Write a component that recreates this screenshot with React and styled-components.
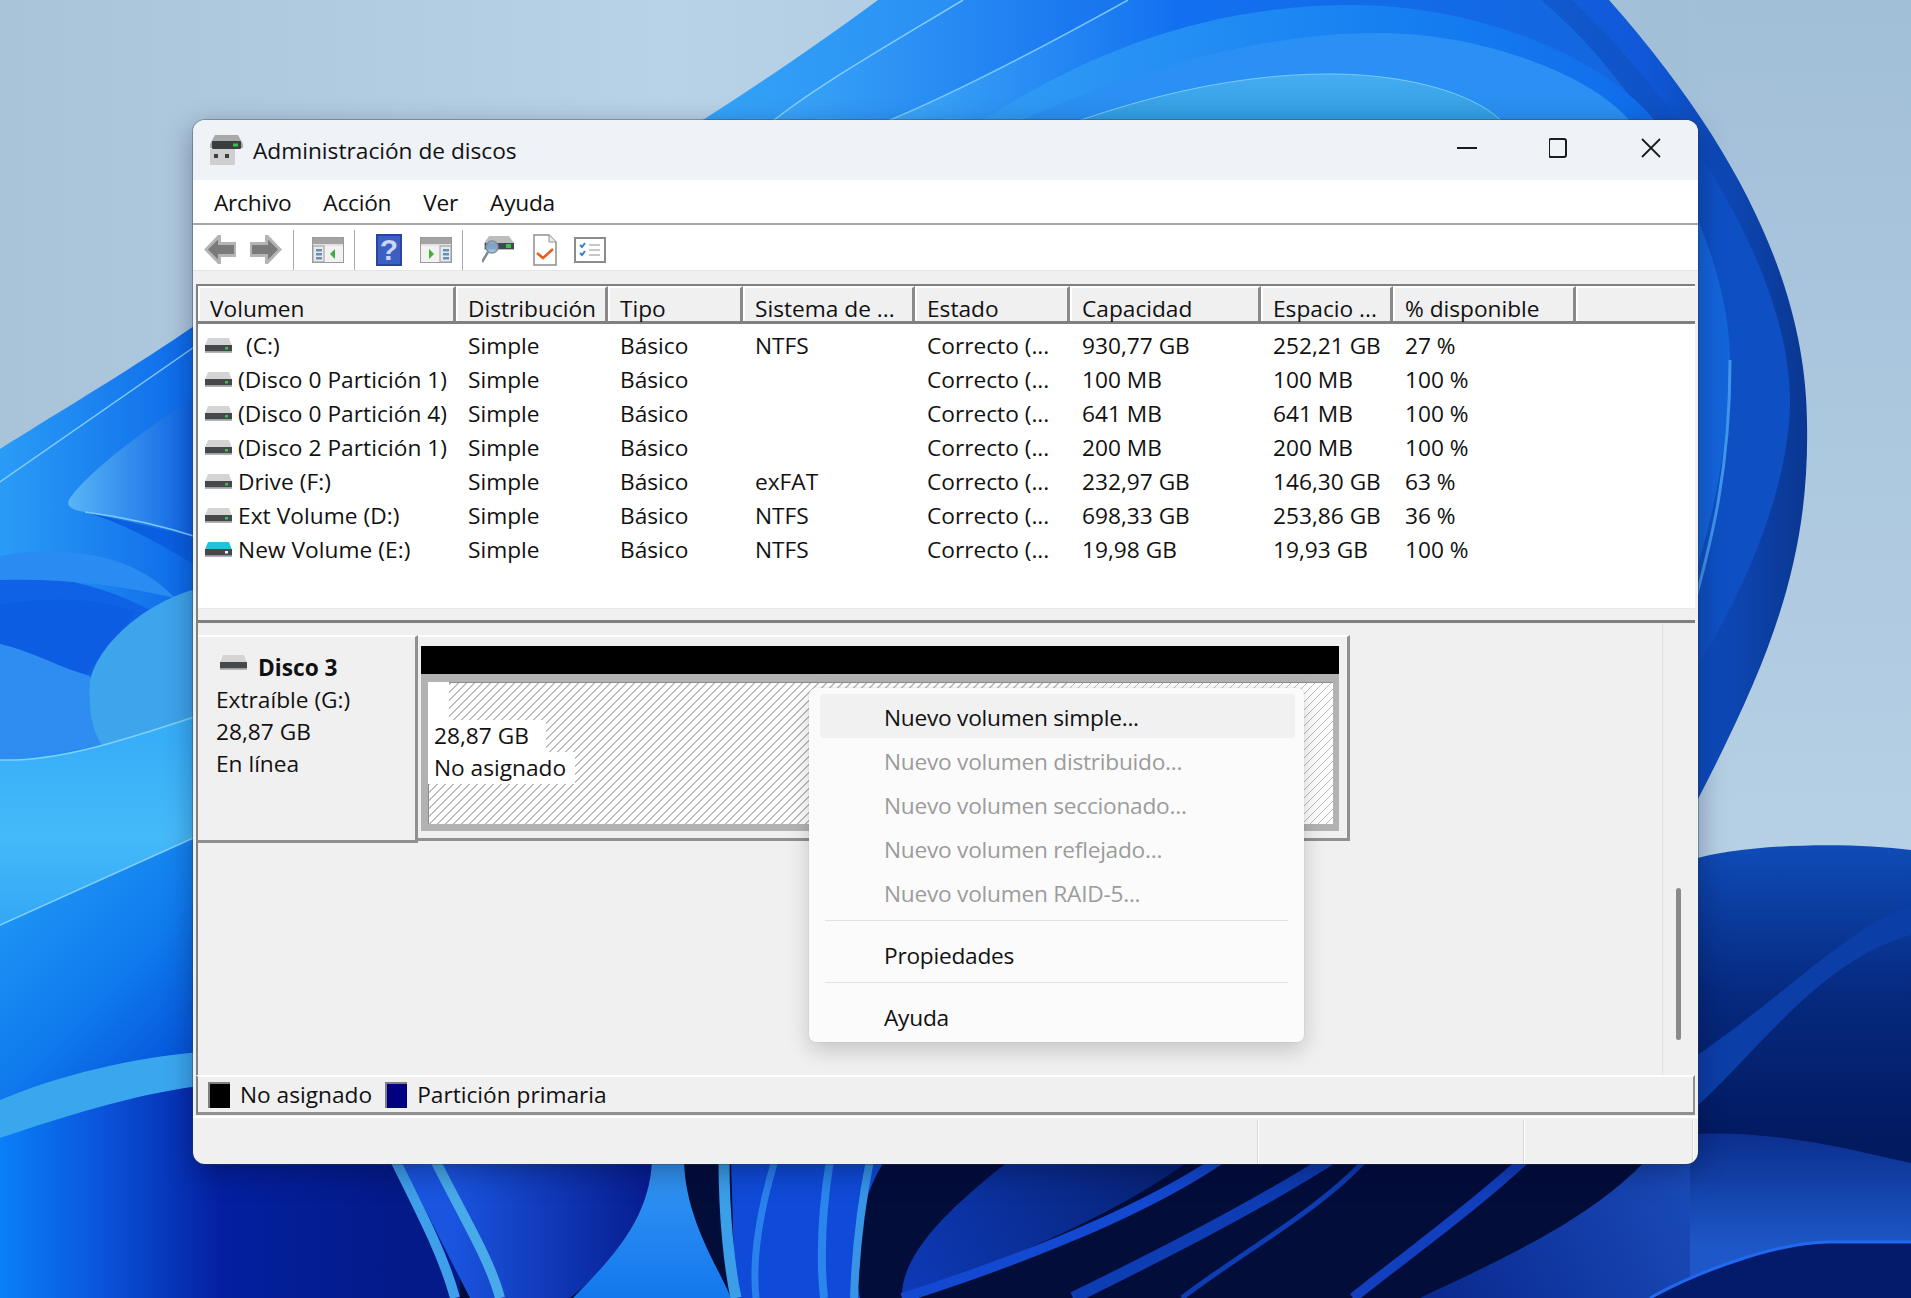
import React from "react";
import styled, { createGlobalStyle } from "styled-components";

const GlobalStyle = createGlobalStyle`
 html, body {
  margin: 0;
  padding: 0;
  overflow: hidden;
  background: #b4cde2;
  font-family: "Open Sans", "Noto Sans", "Liberation Sans", sans-serif;
  color: #111;
 }
`;

const Desktop = styled.div`
 position: relative;
 box-sizing: border-box;
 width: 1911px;
 height: 1298px;
 padding: 120px 0 0 193px;
 overflow: hidden;
`;

const WallpaperSvg = styled.svg`
 position: absolute;
 top: 0;
 left: 0;
 width: 1911px;
 height: 1298px;
`;

const Window = styled.div`
 position: relative;
 display: flex;
 flex-direction: column;
 width: 1505px;
 height: 1044px;
 border-radius: 12px;
 overflow: hidden;
 background: #f0f0f0;
 box-shadow: 0 0 0 1px rgba(50, 60, 70, 0.35), 0 8px 28px rgba(0, 10, 40, 0.35);
 font-size: 22.7px;
`;

const TitleBar = styled.div`
 display: flex;
 align-items: center;
 flex: 0 0 60px;
 padding: 0 37px 0 17px;
 background: #eff3f8;
`;

const TitleText = styled.div`
 flex: 1;
 margin-left: 10px;
`;

const WindowButtons = styled.div`
 display: flex;
 align-items: center;
 gap: 72px;
 margin-bottom: 5px;
`;

const MenuBar = styled.div`
 display: flex;
 gap: 32px;
 align-items: center;
 box-sizing: border-box;
 flex: 0 0 45px;
 padding: 2px 0 0 21px;
 background: #fff;
 border-bottom: 2px solid #a8a8a8;
 letter-spacing: -0.25px;
`;

const Toolbar = styled.div`
 display: flex;
 align-items: center;
 flex: 0 0 46px;
 box-sizing: border-box;
 padding: 4px 0 0 11px;
 background: #fff;
 border-bottom: 1px solid #e4e4e4;
`;

const ToolIcon = styled.div`
 display: flex;
 margin-left: ${(p) => p.$gap || 0}px;
`;

const ToolSeparator = styled.div`
 width: 1px;
 height: 40px;
 margin-left: ${(p) => p.$gap}px;
 background: #a8a8a8;
`;

const Body = styled.div`
 display: flex;
 flex-direction: column;
 flex: 1;
 min-height: 0;
 padding: 13px 3px 0 3px;
`;

const ListPane = styled.div`
 display: flex;
 flex-direction: column;
 flex: 0 0 339px;
 box-sizing: border-box;
 border-top: 2px solid #808080;
 border-left: 2px solid #808080;
 border-bottom: 3px solid #808080;
 background: #fff;
`;

const HeaderRow = styled.div`
 display: grid;
 grid-template-columns: 258px 152px 135px 172px 155px 191px 132px 183px 1fr;
 flex: 0 0 38px;
 box-sizing: border-box;
 border-bottom: 3px solid #808080;
 background: #f0f0f0;
`;

const HeaderCell = styled.div`
 box-sizing: border-box;
 height: 35px;
 padding: 9px 0 0 10px;
 border-top: 2px solid #fff;
 border-left: 2px solid #fff;
 border-right: ${(p) => (p.$last ? "0" : "3px solid #8a8a8a")};
 line-height: 24px;
 white-space: nowrap;
`;

const Rows = styled.div`
 flex: 1;
 padding-top: 4px;
`;

const Row = styled.div`
 display: grid;
 grid-template-columns: 258px 152px 135px 172px 155px 191px 132px 183px 1fr;
 align-items: center;
 height: 34px;
`;

const Cell = styled.div`
 padding-left: 12px;
 white-space: pre;
`;

const NameCell = styled.div`
 display: flex;
 align-items: center;
 gap: ${(p) => p.$gap || 6}px;
 padding-left: 7px;
 white-space: pre;
 letter-spacing: 0.05px;
`;

const HScrollArea = styled.div`
 flex: 0 0 11px;
 background: #f0f0f0;
 border-top: 1px solid #e8e8e8;
`;

const DiskPane = styled.div`
 display: flex;
 flex: 0 0 452px;
 border-left: 2px solid #808080;
 background: #f0f0f0;
`;

const DiskContent = styled.div`
 flex: 1;
 padding-top: 12px;
`;

const DiskRow = styled.div`
 display: flex;
`;

const DiskLabel = styled.div`
 box-sizing: border-box;
 width: 220px;
 height: 208px;
 padding: 15px 0 0 18px;
 background: #f0f0f0;
 border-top: 2px solid #fff;
 border-bottom: 3px solid #909090;
 border-right: 3px solid #909090;
 line-height: 32px;
`;

const DiskName = styled.div`
 display: flex;
 align-items: center;
 gap: 11px;
 font-weight: 700;
 padding-left: 4px;
 height: 32px;
`;

const DiskGlyph = styled.div`
 display: flex;
 margin-bottom: 12px;
`;

const PartitionBox = styled.div`
 box-sizing: border-box;
 width: 932px;
 height: 206px;
 padding: 9px 0 0 3px;
 border-top: 2px solid #fff;
 border-right: 3px solid #909090;
 border-bottom: 3px solid #909090;
 background: #f0f0f0;
`;

const PartitionFrame = styled.div`
 width: 918px;
`;

const BlackBar = styled.div`
 height: 28px;
 background: #000;
`;

const HatchFrame = styled.div`
 box-sizing: border-box;
 height: 157px;
 padding: 8px 6px 7px 7px;
 background: #b2b2b2;
`;

const Hatch = styled.div`
 height: 100%;
 background: repeating-linear-gradient(135deg, #fff 0 4.7px, #bcbcbc 4.7px 5.66px);
 box-shadow: inset 1px 1px 0 #8c8c8c;
`;

const HatchBlank = styled.div`
 width: 21px;
 height: 38px;
 background: #fff;
`;

const HatchLine = styled.div`
 width: ${(p) => p.$width}px;
 box-sizing: border-box;
 padding-left: 6px;
 height: 32px;
 line-height: 32px;
 background: #fff;
 white-space: nowrap;
`;

const ScrollTrack = styled.div`
 flex: 0 0 33px;
 box-sizing: border-box;
 padding: 265px 0 0 13px;
 border-left: 1px solid #e2e2e2;
`;

const ScrollThumb = styled.div`
 width: 5px;
 height: 152px;
 border-radius: 3px;
 background: #8a8a8a;
`;

const Legend = styled.div`
 display: flex;
 align-items: center;
 flex: 0 0 40px;
 box-sizing: border-box;
 padding: 0 0 0 10px;
 border-top: 2px solid #fff;
 border-left: 2px solid #808080;
 border-right: 2px solid #909090;
 border-bottom: 3px solid #909090;
`;

const Swatch = styled.div`
 box-sizing: border-box;
 width: 22px;
 height: 26px;
 margin-right: 10px;
 border-top: 2px solid #808080;
 border-left: 2px solid #808080;
 background: ${(p) => p.$color};
`;

const LegendText = styled.div`
 margin-right: ${(p) => p.$gap || 0}px;
 white-space: nowrap;
`;

const StatusBar = styled.div`
 display: grid;
 grid-template-columns: 1065px 266px 1fr;
 flex: 1;
 margin: 1px -3px 0;
 padding-right: 5px;
 border-top: 2px solid #fff;
`;

const StatusPart = styled.div`
 margin-top: 2px;
 border-right: 1px solid #d8d8d8;
 box-shadow: 1px 0 0 #fff;
`;

const ContextMenu = styled.div`
 position: absolute;
 top: 568px;
 left: 616px;
 box-sizing: border-box;
 width: 495px;
 height: 354px;
 padding: 6px 9px 0 11px;
 background: #fbfbfb;
 border-radius: 7px;
 box-shadow: 0 0 2px rgba(0, 0, 0, 0.12), 0 8px 22px rgba(0, 0, 0, 0.18);
 letter-spacing: -0.25px;
`;

const MenuItem = styled.div`
 display: flex;
 align-items: center;
 box-sizing: border-box;
 height: 44px;
 padding: ${(p) => (p.$active ? "3px 0 1px 64px" : "0 0 2px 64px")};
 margin-bottom: ${(p) => (p.$active ? "2px" : "0")};
 border-radius: 4px;
 color: ${(p) => (p.$disabled ? "#9c9c9c" : "#111")};
 background: ${(p) => (p.$active ? "#f1f1f1" : "transparent")};
`;

const MenuDivider = styled.div`
 height: 1px;
 margin: 4px 7px 13px 5px;
 background: #e2e2e2;
`;

const columns = ["Volumen", "Distribución", "Tipo", "Sistema de ...", "Estado", "Capacidad", "Espacio ...", "% disponible", ""];

const volumes = [
 [" (C:)", "Simple", "Básico", "NTFS", "Correcto (...", "930,77 GB", "252,21 GB", "27 %"],
 ["(Disco 0 Partición 1)", "Simple", "Básico", "", "Correcto (...", "100 MB", "100 MB", "100 %"],
 ["(Disco 0 Partición 4)", "Simple", "Básico", "", "Correcto (...", "641 MB", "641 MB", "100 %"],
 ["(Disco 2 Partición 1)", "Simple", "Básico", "", "Correcto (...", "200 MB", "200 MB", "100 %"],
 ["Drive (F:)", "Simple", "Básico", "exFAT", "Correcto (...", "232,97 GB", "146,30 GB", "63 %"],
 ["Ext Volume (D:)", "Simple", "Básico", "NTFS", "Correcto (...", "698,33 GB", "253,86 GB", "36 %"],
 ["New Volume (E:)", "Simple", "Básico", "NTFS", "Correcto (...", "19,98 GB", "19,93 GB", "100 %"],
];

function DriveIcon({ top = "#d4d4d4", led = "#37c24a" }) {
 return (
  <svg width="27" height="15" viewBox="0 0 27 15">
   <path d="M3 0H24L27 8V14H0V8Z" fill={top} />
   <rect x="0" y="7" width="27" height="6.5" fill="#45494c" />
   <rect x="0" y="13.5" width="27" height="1.5" fill="#b4b4b4" />
   <rect x="20" y="9" width="3" height="2.5" fill={led} />
  </svg>
 );
}

function AppIcon() {
 return (
  <svg width="33" height="30" viewBox="0 0 33 30">
   <path d="M5 0H28L33 9V13H0V9Z" fill="#a9a9a9" />
   <rect x="2" y="6" width="29" height="8" rx="1" fill="#3b3e40" />
   <rect x="23" y="8.500" width="5" height="3" fill="#36c24b" />
   <rect x="0" y="14" width="25" height="16" fill="#cfcfcf" />
   <rect x="4" y="19" width="4" height="4" fill="#3b3e40" />
   <rect x="15" y="19" width="4" height="4" fill="#3b3e40" />
  </svg>
 );
}

function ArrowIcon({ flip }) {
 return (
  <svg width="32" height="29" viewBox="0 0 32 29" style={{ transform: flip ? "scaleX(-1)" : "none" }}>
   <path d="M0 14.5L14 0H17V7H32V22H17V29H14Z" fill="#b4b4b4" />
   <path d="M4 14.5L14 4.500V10H30V19H14V24.500Z" fill="#7a7a7a" />
  </svg>
 );
}

function PanelIcon({ right }) {
 return (
  <svg width="32" height="26" viewBox="0 0 32 26">
   <rect x="0.5" y="0.5" width="31" height="25" fill="#f2f2f2" stroke="#9a9a9a" />
   <rect x="1" y="1" width="30" height="6" fill="#a3a3a3" />
   <rect x="1" y="7" width="30" height="2" fill="#e2e2e2" />
   <rect x={right ? 20 : 1} y="9" width="11" height="16" fill="#e6eaee" stroke="#9a9a9a" />
   <rect x={right ? 23 : 4} y="12" width="6" height="2.500" fill="#6a8fb5" />
   <rect x={right ? 23 : 4} y="16" width="6" height="2.500" fill="#6a8fb5" />
   <rect x={right ? 23 : 4} y="20" width="6" height="2.500" fill="#6a8fb5" />
   <path d={right ? "M9 12V22L14 17Z" : "M23 12V22L18 17Z"} fill="#3fae3a" />
  </svg>
 );
}

function HelpIcon() {
 return (
  <svg width="26" height="32" viewBox="0 0 26 32">
   <rect width="26" height="32" fill="#27449f" />
   <rect x="2" y="2" width="22" height="28" fill="#3c5fc4" />
   <text x="13" y="26" textAnchor="middle" fontFamily="Liberation Sans, sans-serif" fontWeight="700" fontSize="30" fill="#cdd5f2">?</text>
  </svg>
 );
}

function FindIcon() {
 return (
  <svg width="32" height="27" viewBox="0 0 32 27">
   <path d="M7 0H27L32 7V14H2V7Z" fill="#bdbdbd" />
   <rect x="3" y="7" width="29" height="6" fill="#3e4a50" />
   <rect x="24" y="8" width="5" height="4" fill="#3ec24d" />
   <circle cx="10" cy="11" r="6" fill="#8fb4d8" fillOpacity="0.85" stroke="#7f8f9c" strokeWidth="1.500" />
   <path d="M6 16L0 26" stroke="#7d8c9a" strokeWidth="2.500" />
  </svg>
 );
}

function CheckDocIcon() {
 return (
  <svg width="24" height="32" viewBox="0 0 24 32">
   <path d="M1 1H16L23 8V31H1Z" fill="#fff" stroke="#8f8f8f" strokeWidth="1.500" />
   <path d="M16 1V8H23" fill="#ececec" stroke="#8f8f8f" />
   <path d="M4 19L10 24L20 15" fill="none" stroke="#ea5a1e" strokeWidth="2.500" />
  </svg>
 );
}

function ChecklistIcon() {
 return (
  <svg width="32" height="26" viewBox="0 0 32 26">
   <rect x="1" y="1" width="30" height="24" fill="#fff" stroke="#8c8c8c" strokeWidth="2" />
   <path d="M6 8L8 10L11 6M6 16L8 18L11 14" fill="none" stroke="#2f7fd8" strokeWidth="2" />
   <path d="M15 8H26M15 13H26M15 18H26" stroke="#b5b5b5" strokeWidth="1.500" />
  </svg>
 );
}

function Wallpaper() {
 return (
  <WallpaperSvg viewBox="0 0 1911 1298">
   <defs>
    <linearGradient id="sky" x1="0" y1="0" x2="1" y2="0">
     <stop offset="0" stopColor="#a9c3d9" />
     <stop offset="0.35" stopColor="#b8d2e7" />
     <stop offset="0.87" stopColor="#a2bfd8" />
     <stop offset="1" stopColor="#a8c4dc" />
    </linearGradient>
    <linearGradient id="skyRight" x1="0" y1="0" x2="0" y2="1">
     <stop offset="0" stopColor="#a2bfd8" />
     <stop offset="1" stopColor="#b6d0e5" />
    </linearGradient>
    <linearGradient id="petalA" gradientUnits="userSpaceOnUse" x1="700" y1="0" x2="1810" y2="0">
     <stop offset="0" stopColor="#35a4f8" />
     <stop offset="0.5" stopColor="#1b76ee" />
     <stop offset="0.85" stopColor="#1058d8" />
     <stop offset="1" stopColor="#0a3690" />
    </linearGradient>
    <linearGradient id="petalB" gradientUnits="userSpaceOnUse" x1="770" y1="0" x2="1790" y2="0">
     <stop offset="0" stopColor="#3aa6f8" />
     <stop offset="0.3" stopColor="#1a78f0" />
     <stop offset="0.9" stopColor="#0e50c4" />
    </linearGradient>
    <linearGradient id="petalC" gradientUnits="userSpaceOnUse" x1="880" y1="0" x2="1730" y2="0">
     <stop offset="0" stopColor="#3fabf8" />
     <stop offset="0.35" stopColor="#1270f0" />
     <stop offset="1" stopColor="#1464da" />
    </linearGradient>
    <linearGradient id="archC" gradientUnits="userSpaceOnUse" x1="975" y1="0" x2="1658" y2="0">
     <stop offset="0" stopColor="#329df5" />
     <stop offset="0.6" stopColor="#1680f2" />
     <stop offset="1" stopColor="#106cea" />
    </linearGradient>
    <linearGradient id="archE" gradientUnits="userSpaceOnUse" x1="0" y1="70" x2="0" y2="125">
     <stop offset="0" stopColor="#47aef2" />
     <stop offset="1" stopColor="#2f9ce0" />
    </linearGradient>
    <linearGradient id="leftBase" gradientUnits="userSpaceOnUse" x1="0" y1="0" x2="200" y2="0">
     <stop offset="0" stopColor="#2a9cf7" />
     <stop offset="1" stopColor="#0c68e8" />
    </linearGradient>
    <linearGradient id="tip" gradientUnits="userSpaceOnUse" x1="70" y1="0" x2="200" y2="0">
     <stop offset="0" stopColor="#57b4f6" />
     <stop offset="1" stopColor="#0a5ee2" />
    </linearGradient>
    <linearGradient id="cyan" gradientUnits="userSpaceOnUse" x1="0" y1="740" x2="0" y2="930">
     <stop offset="0" stopColor="#37aef8" />
     <stop offset="0.5" stopColor="#45baf9" />
     <stop offset="1" stopColor="#33a6f6" />
    </linearGradient>
    <linearGradient id="lowerLeft" gradientUnits="userSpaceOnUse" x1="0" y1="850" x2="200" y2="1050">
     <stop offset="0" stopColor="#239cf6" />
     <stop offset="0.6" stopColor="#0f7bee" />
     <stop offset="1" stopColor="#0554d8" />
    </linearGradient>
    <linearGradient id="cornerLeft" gradientUnits="userSpaceOnUse" x1="0" y1="0" x2="400" y2="0">
     <stop offset="0" stopColor="#0a80f8" />
     <stop offset="0.25" stopColor="#0a55dc" />
     <stop offset="0.55" stopColor="#0420a0" />
     <stop offset="1" stopColor="#031a88" />
    </linearGradient>
    <linearGradient id="midBlue" gradientUnits="userSpaceOnUse" x1="450" y1="0" x2="660" y2="0">
     <stop offset="0" stopColor="#1a55e0" />
     <stop offset="1" stopColor="#061a8c" />
    </linearGradient>
    <linearGradient id="flare" gradientUnits="userSpaceOnUse" x1="0" y1="1160" x2="0" y2="1298">
     <stop offset="0" stopColor="#3596f2" />
     <stop offset="1" stopColor="#1378ee" />
    </linearGradient>
    <linearGradient id="broad" gradientUnits="userSpaceOnUse" x1="900" y1="1298" x2="1200" y2="1164">
     <stop offset="0" stopColor="#0d3ab8" />
     <stop offset="1" stopColor="#07206e" />
    </linearGradient>
    <linearGradient id="rightBottomA" gradientUnits="userSpaceOnUse" x1="0" y1="843" x2="0" y2="1140">
     <stop offset="0" stopColor="#0f4cb8" />
     <stop offset="0.5" stopColor="#062a80" />
     <stop offset="1" stopColor="#021a60" />
    </linearGradient>
    <linearGradient id="rightBottomB" gradientUnits="userSpaceOnUse" x1="0" y1="1134" x2="0" y2="1250">
     <stop offset="0" stopColor="#0b2f8e" />
     <stop offset="1" stopColor="#1e58c8" />
    </linearGradient>
    <linearGradient id="bottomBand" gradientUnits="userSpaceOnUse" x1="1440" y1="1298" x2="1700" y2="1170">
     <stop offset="0" stopColor="#0a2a90" />
     <stop offset="1" stopColor="#1a4cba" />
    </linearGradient>
   </defs>

   <rect width="1911" height="1298" fill="url(#sky)" />
   <rect x="1698" y="0" width="213" height="860" fill="url(#skyRight)" />

   <path d="M878 0C810 50 750 90 695 125V900H1400L1698 799C1770 660 1810 560 1807 422C1806 310 1760 170 1609 0Z" fill="url(#petalA)" />
   <path d="M963 0C880 50 810 90 768 125V900H1500C1700 720 1790 520 1790 400C1790 280 1690 110 1572 0Z" fill="url(#petalB)" />
   <path d="M963 0C880 50 810 90 768 125" fill="none" stroke="#86cdfb" strokeWidth="1.5" />
   <path d="M1128 0C1020 60 940 100 878 125V900H1500C1690 700 1730 480 1730 360C1730 260 1660 100 1541 0Z" fill="url(#petalC)" />
   <path d="M1128 0C1020 60 940 100 878 125" fill="none" stroke="#79c6fa" strokeWidth="1.5" />
   <path d="M1730 360C1730 470 1712 540 1690 620" fill="none" stroke="#3f96ea" strokeWidth="3" />
   <path d="M975 125C1090 50 1210 5 1353 5C1480 5 1610 60 1658 125Z" fill="url(#archC)" />
   <path d="M1012 125C1130 70 1260 33 1378 33C1490 33 1600 80 1633 125Z" fill="#2a90f3" />
   <path d="M1067 125C1150 95 1240 74 1329 74C1410 74 1480 95 1505 125Z" fill="url(#archE)" stroke="#7bcbf5" strokeWidth="1" />

   <path d="M0 449C70 405 130 370 200 322V1170H0Z" fill="url(#leftBase)" />
   <path d="M0 482L200 343" fill="none" stroke="#83cbfa" strokeWidth="1.5" />
   <path d="M85 512C130 525 170 550 200 568V538Z" fill="#0a5ee0" />
   <path d="M200 394C150 425 90 470 70 498C65 505 70 510 85 512C130 520 170 530 200 538Z" fill="url(#tip)" />
   <path d="M85 512C130 518 170 528 200 538" fill="none" stroke="#7cc8f8" strokeWidth="1.5" />
   <path d="M0 575C60 575 120 585 200 640V720L90 696L0 644Z" fill="#0f62e6" />
   <path d="M0 556C60 546 130 550 175 598C120 585 60 578 0 580Z" fill="#2a8cf2" />
   <path d="M0 605C50 596 100 598 135 612C115 640 95 660 85 676C60 670 30 650 0 644Z" fill="#0c5de2" />
   <path d="M0 644C30 650 60 668 90 676L104 745L0 762Z" fill="#2f8cf0" />
   <path d="M200 588C150 600 100 640 90 680C88 710 92 730 102 745L200 722Z" fill="#3ea4ec" />
   <path d="M0 760C60 762 130 738 200 715V845L0 930Z" fill="url(#cyan)" />
   <path d="M0 760C60 762 130 738 200 715" fill="none" stroke="#7fd2fa" strokeWidth="1.5" />
   <path d="M0 925L200 835V1060L0 1105Z" fill="url(#lowerLeft)" />
   <path d="M0 925L200 835" fill="none" stroke="#82d0fa" strokeWidth="1.5" />
   <path d="M0 1100C60 1075 130 1058 200 1052V1086C130 1095 60 1118 0 1138Z" fill="#3aa6ee" />

   <rect x="0" y="1160" width="1700" height="138" fill="#030d3a" />
   <path d="M0 1138C60 1118 130 1095 200 1086V1160H460V1298H0Z" fill="url(#cornerLeft)" />
   <path d="M400 1160H660L640 1240L570 1298H470Z" fill="url(#midBlue)" />
   <path d="M652 1160H684C685 1220 720 1270 731 1298H573C610 1260 650 1220 652 1160Z" fill="url(#flare)" />
   <path d="M395 1160C425 1220 445 1260 455 1298" fill="none" stroke="#3f9fea" strokeWidth="10" />
   <path d="M435 1160C465 1220 490 1260 500 1298" fill="none" stroke="#48aae8" strokeWidth="10" />
   <path d="M731 1160H885C860 1200 850 1250 860 1298H735Z" fill="#0f4bd8" />
   <path d="M724 1160C724 1220 730 1270 736 1298" fill="none" stroke="#3a9fe8" strokeWidth="11" />
   <path d="M775 1160C760 1210 752 1260 756 1298" fill="none" stroke="#2a80ec" strokeWidth="7" />
   <path d="M830 1160C822 1210 820 1260 824 1298" fill="none" stroke="#2a86ee" strokeWidth="8" />
   <path d="M870 1160C862 1200 856 1240 854 1298" fill="none" stroke="#3794e6" strokeWidth="8" />
   <path d="M1010 1160H1190C1110 1220 980 1270 902 1298C900 1250 960 1200 1010 1160Z" fill="url(#broad)" />
   <path d="M1219 1160C1130 1220 990 1270 902 1298" fill="none" stroke="#1348d0" strokeWidth="10" />
   <path d="M1329 1160C1250 1210 1150 1260 1073 1298" fill="none" stroke="#0e3cb2" strokeWidth="12" />
   <path d="M1365 1160C1320 1210 1230 1260 1182 1298" fill="none" stroke="#0e3cb2" strokeWidth="5" />
   <path d="M1524 1160C1470 1210 1400 1260 1353 1298" fill="none" stroke="#123fbe" strokeWidth="10" />
   <path d="M1646 1160H1700V1298H1420C1500 1260 1590 1220 1646 1160Z" fill="url(#bottomBand)" />

   <path d="M1690 860C1750 843 1850 842 1911 850V1200H1690Z" fill="url(#rightBottomA)" />
   <path d="M1690 1060C1780 1000 1850 925 1911 906V935C1820 960 1760 1050 1690 1113Z" fill="#0c3ea8" />
   <path d="M1690 1134C1780 1130 1850 1150 1911 1163V1298H1690Z" fill="url(#rightBottomB)" />
   <path d="M1650 1298C1700 1270 1780 1242 1829 1242H1911V1298Z" fill="#041a6a" />
   <path d="M1650 1298C1700 1270 1780 1242 1829 1242H1911" fill="none" stroke="#1f6af0" strokeWidth="3" />
  </WallpaperSvg>
 );
}

export default function App() {
 return (
  <>
   <GlobalStyle />
   <Desktop>
    <Wallpaper />
    <Window>
     <TitleBar>
      <AppIcon />
      <TitleText>Administración de discos</TitleText>
      <WindowButtons>
       <svg width="20" height="20" viewBox="0 0 20 20">
        <path d="M0 10H20" stroke="#1c1c1c" strokeWidth="2" />
       </svg>
       <svg width="20" height="20" viewBox="0 0 20 20">
        <rect x="0" y="1" width="17" height="18" rx="2" fill="none" stroke="#1c1c1c" strokeWidth="2" />
       </svg>
       <svg width="20" height="20" viewBox="0 0 20 20">
        <path d="M1 1L19 19M19 1L1 19" stroke="#1c1c1c" strokeWidth="1.800" />
       </svg>
      </WindowButtons>
     </TitleBar>

     <MenuBar>
      <span>Archivo</span>
      <span>Acción</span>
      <span>Ver</span>
      <span>Ayuda</span>
     </MenuBar>

     <Toolbar>
      <ToolIcon><ArrowIcon /></ToolIcon>
      <ToolIcon $gap={14}><ArrowIcon flip /></ToolIcon>
      <ToolSeparator $gap={11} />
      <ToolIcon $gap={18}><PanelIcon /></ToolIcon>
      <ToolSeparator $gap={10} />
      <ToolIcon $gap={21}><HelpIcon /></ToolIcon>
      <ToolIcon $gap={18}><PanelIcon right /></ToolIcon>
      <ToolSeparator $gap={10} />
      <ToolIcon $gap={19}><FindIcon /></ToolIcon>
      <ToolIcon $gap={19}><CheckDocIcon /></ToolIcon>
      <ToolIcon $gap={17}><ChecklistIcon /></ToolIcon>
     </Toolbar>

     <Body>
      <ListPane>
       <HeaderRow>
        {columns.map((col, i) => (
         <HeaderCell key={col} $last={i === columns.length - 1}>{col}</HeaderCell>
        ))}
       </HeaderRow>
       <Rows>
        {volumes.map((vol, i) => (
         <Row key={vol[0]}>
          <NameCell $gap={i === 0 ? 8 : 6}>
           <DriveIcon top={i === 6 ? "#1fc4dc" : undefined} led={i === 6 ? "#f2f2f2" : undefined} />
           {vol[0]}
          </NameCell>
          {vol.slice(1).map((text, j) => (
           <Cell key={j}>{text}</Cell>
          ))}
         </Row>
        ))}
       </Rows>
       <HScrollArea />
      </ListPane>

      <DiskPane>
       <DiskContent>
        <DiskRow>
         <DiskLabel>
          <DiskName>
           <DiskGlyph>
            <DriveIcon led="#45494c" />
           </DiskGlyph>
           Disco 3
          </DiskName>
          <div>Extraíble (G:)</div>
          <div>28,87 GB</div>
          <div>En línea</div>
         </DiskLabel>
         <PartitionBox>
          <PartitionFrame>
           <BlackBar />
           <HatchFrame>
            <Hatch>
             <HatchBlank />
             <HatchLine $width={118}>28,87 GB</HatchLine>
             <HatchLine $width={147}>No asignado</HatchLine>
            </Hatch>
           </HatchFrame>
          </PartitionFrame>
         </PartitionBox>
        </DiskRow>
       </DiskContent>
       <ScrollTrack>
        <ScrollThumb />
       </ScrollTrack>
      </DiskPane>

      <Legend>
       <Swatch $color="#000" />
       <LegendText $gap={13}>No asignado</LegendText>
       <Swatch $color="#000080" />
       <LegendText>Partición primaria</LegendText>
      </Legend>

      <StatusBar>
       <StatusPart />
       <StatusPart />
       <StatusPart />
      </StatusBar>
     </Body>

     <ContextMenu>
      <MenuItem $active>Nuevo volumen simple...</MenuItem>
      <MenuItem $disabled>Nuevo volumen distribuido...</MenuItem>
      <MenuItem $disabled>Nuevo volumen seccionado...</MenuItem>
      <MenuItem $disabled>Nuevo volumen reflejado...</MenuItem>
      <MenuItem $disabled>Nuevo volumen RAID-5...</MenuItem>
      <MenuDivider />
      <MenuItem>Propiedades</MenuItem>
      <MenuDivider />
      <MenuItem>Ayuda</MenuItem>
     </ContextMenu>
    </Window>
   </Desktop>
  </>
 );
}
